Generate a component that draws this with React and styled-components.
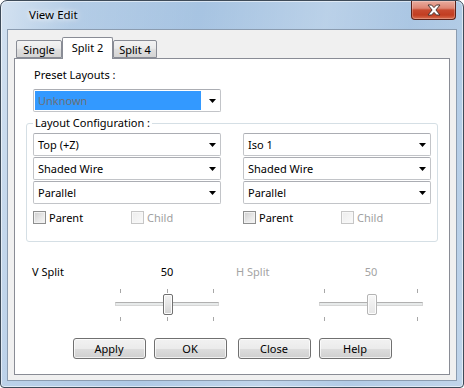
import React from 'react';
import styled, { createGlobalStyle } from 'styled-components';

const GlobalStyle = createGlobalStyle`
  html, body { margin: 0; padding: 0; }
  body {
    width: 464px;
    height: 388px;
    overflow: hidden;
    font-family: "Noto Sans", "Open Sans", sans-serif;
    font-size: 11px;
    color: #000;
  }
  * { box-sizing: border-box; }
`;

const Window = styled.div`
  width: 464px;
  height: 388px;
  border: 1px solid #3e4b59;
  border-radius: 7px 7px 4px 4px;
  background:
    linear-gradient(100deg, rgba(255,255,255,0.5) 0%, rgba(255,255,255,0.15) 14%, rgba(255,255,255,0) 38%, rgba(255,255,255,0.22) 62%, rgba(255,255,255,0.04) 78%, rgba(255,255,255,0.22) 100%),
    linear-gradient(to bottom, #a7c4e2, #afc9e5);
  box-shadow: inset 0 0 0 1px rgba(255,255,255,0.55);
  display: flex;
  flex-direction: column;
`;

const TitleBar = styled.div`
  flex: 0 0 28px;
  display: flex;
  align-items: flex-start;
`;

const TitleText = styled.span`
  margin: 6px 0 0 28px;
  font-size: 11.5px;
  line-height: 16px;
  text-shadow: 0 0 5px #fff, 0 0 9px rgba(255,255,255,0.9);
`;

const CloseButton = styled.div`
  margin-left: auto;
  margin-right: 7px;
  width: 45px;
  height: 19px;
  border: 1px solid #5b2118;
  border-top: none;
  border-radius: 0 0 4px 4px;
  background: linear-gradient(#e9ac9e 0%, #de8573 40%, #c84a2f 50%, #c23d21 78%, #d96e4f 100%);
  box-shadow: inset 0 0 0 1px rgba(255,255,255,0.25);
  display: flex;
  align-items: center;
  justify-content: center;
`;

const Client = styled.div`
  flex: 1;
  margin: 0 6px 6px;
  border: 1px solid #8b9cb0;
  background: #f0f0f0;
  padding: 7px 6px 5px;
  display: flex;
  flex-direction: column;
`;

const TabStrip = styled.div`
  flex: 0 0 21px;
  display: flex;
  align-items: flex-end;
  padding-left: 2px;
  position: relative;
  z-index: 1;
`;

const Tab = styled.div`
  width: ${p => p.$w}px;
  height: ${p => (p.$active ? 22 : 18)}px;
  margin-bottom: ${p => (p.$active ? -1 : 0)}px;
  border: 1px solid #898c95;
  border-bottom: ${p => (p.$active ? 'none' : '1px solid #898c95')};
  border-radius: 2px 2px 0 0;
  background: ${p => (p.$active ? '#fff' : 'linear-gradient(#f3f3f3 0%, #ebebeb 45%, #dedede 55%, #d4d4d4 100%)')};
  display: flex;
  align-items: center;
  justify-content: center;
  padding-top: ${p => (p.$active ? 0 : 1)}px;
  padding-bottom: ${p => (p.$active ? 2 : 0)}px;
  line-height: 16px;
`;

const Panel = styled.div`
  flex: 1;
  background: #fff;
  border: 1px solid #898c95;
  padding-top: 8px;
  display: flex;
  flex-direction: column;
`;

const FieldLabel = styled.div`
  padding-left: 19px;
  line-height: 16px;
  height: 16px;
`;

const Combo = styled.div`
  width: 188px;
  height: 23px;
  margin: ${p => p.$margin || '0'};
  border: 1px solid #c2c4c8;
  border-top-color: #abadb3;
  border-radius: 2px;
  background: #fff;
  display: flex;
  align-items: center;
  padding: 0 4px 0 ${p => (p.$selected ? 1 : 4)}px;
  line-height: 16px;
`;

const ComboText = styled.span`
  flex: 1;
  white-space: nowrap;
`;

const Selection = styled.span`
  flex: 0 0 166px;
  align-self: stretch;
  margin: 1px 0;
  background: #3399ff;
  color: #6a7077;
  padding-left: 3px;
  display: flex;
  align-items: center;
`;

const ArrowWrap = styled.span`
  margin-left: auto;
  display: flex;
  align-items: center;
`;

const Group = styled.fieldset`
  margin: 3px 0 0 11px;
  width: 412px;
  min-width: 0;
  border: 1px solid #d5dfe5;
  border-radius: 3px;
  padding: 2px 6px 17px 6px;
`;

const Legend = styled.legend`
  padding: 0 2px;
  line-height: 16px;
`;

const ConfigGrid = styled.div`
  display: grid;
  grid-template-columns: 188px 188px;
  column-gap: 22px;
`;

const ConfigColumn = styled.div`
  display: flex;
  flex-direction: column;
  gap: 1px;
`;

const CheckRow = styled.div`
  margin-top: 6px;
  display: grid;
  grid-template-columns: 98px auto;
  height: 13px;
`;

const CheckItem = styled.label`
  display: flex;
  align-items: center;
  gap: 3px;
  line-height: 13px;
  color: ${p => (p.$disabled ? '#a0a0a0' : '#000')};
`;

const CheckBox = styled.span`
  width: 13px;
  height: 13px;
  flex: 0 0 13px;
  border: 1px solid ${p => (p.$disabled ? '#c6c6c6' : '#8e8f8f')};
  background: ${p => (p.$disabled ? 'linear-gradient(135deg, #ececec, #fafafa)' : 'linear-gradient(135deg, #cdcdcd 0%, #e9e9e9 60%, #f5f5f5 100%)')};
  box-shadow: inset 0 0 0 1px ${p => (p.$disabled ? '#f7f7f7' : '#f1f1f1')};
`;

const SplitRow = styled.div`
  margin-top: 22px;
  padding-left: 17px;
  display: flex;
`;

const SplitControl = styled.div`
  width: 204px;
  display: grid;
  grid-template-columns: 83px 104px;
  grid-template-rows: 16px 32px;
  row-gap: 9px;
  color: ${p => (p.$disabled ? '#a3a3a3' : '#000')};
`;

const SplitLabel = styled.div`
  line-height: 16px;
  white-space: nowrap;
`;

const SplitValue = styled.div`
  line-height: 16px;
  text-align: center;
`;

const Slider = styled.div`
  grid-column: 2;
  position: relative;
  display: flex;
  flex-direction: column;
`;

const TickRow = styled.div`
  height: 4px;
  padding: 0 5px;
  display: flex;
  justify-content: space-between;
  margin-top: ${p => p.$top || 0}px;
`;

const Tick = styled.span`
  width: 1px;
  height: 4px;
  background: #a7a7a7;
`;

const Track = styled.div`
  margin-top: 9px;
  height: 4px;
  border: 1px solid #d6d6d6;
  border-top-color: #b0b0b0;
  background: #e7eaea;
`;

const Thumb = styled.div`
  position: absolute;
  top: 5px;
  width: 10px;
  height: 21px;
  border: 1px solid ${p => (p.$disabled ? '#b4b4b4' : '#707070')};
  border-radius: 2px;
  background: ${p => (p.$disabled ? 'linear-gradient(#f8f8f8, #eeeeee 50%, #e6e6e6)' : 'linear-gradient(#f3f3f3, #e6e6e6 45%, #d2d2d2)')};
  box-shadow: inset 0 0 0 1px #fcfcfc;
`;

const ButtonRow = styled.div`
  margin-top: 17px;
  display: flex;
  justify-content: center;
  gap: 8px;
`;

const Button = styled.button`
  width: 73px;
  height: 21px;
  margin-left: ${p => (p.$extra ? 3 : 0)}px;
  padding: 0;
  border: 1px solid #707070;
  border-radius: 3px;
  background: linear-gradient(#f2f2f2 0%, #ebebeb 50%, #dddddd 51%, #cfcfcf 100%);
  box-shadow: inset 0 0 0 1px rgba(255,255,255,0.7);
  font-family: inherit;
  font-size: 11px;
  line-height: 16px;
  color: #000;
`;

const Arrow = () => (
  <ArrowWrap>
    <svg width="7" height="4" viewBox="0 0 7 4">
      <polygon points="0,0 7,0 3.5,4" fill="#000" />
    </svg>
  </ArrowWrap>
);

const CloseGlyph = () => (
  <svg width="14" height="12" viewBox="0 0 14 12">
    <path
      d="M1 1 H4.6 L7 3.6 L9.4 1 H13 L8.9 6 L13 11 H9.4 L7 8.4 L4.6 11 H1 L5.1 6 Z"
      fill="#fff"
      stroke="#4b3530"
      strokeWidth="1"
      strokeLinejoin="round"
    />
  </svg>
);

const ComboBox = ({ value, margin }) => (
  <Combo $margin={margin}>
    <ComboText>{value}</ComboText>
    <Arrow />
  </Combo>
);

const Check = ({ label, disabled }) => (
  <CheckItem $disabled={disabled}>
    <CheckBox $disabled={disabled} />
    {label}
  </CheckItem>
);

const SliderControl = ({ frac, ticks, disabled }) => {
  const list = Array.from({ length: ticks });
  return (
    <Slider>
      <TickRow>{list.map((_, i) => <Tick key={i} />)}</TickRow>
      <Track />
      <TickRow $top={11}>{list.map((_, i) => <Tick key={i} />)}</TickRow>
      <Thumb $disabled={disabled} style={{ left: Math.round(frac * 94) + 1 }} />
    </Slider>
  );
};

const columns = [
  ['Top (+Z)', 'Shaded Wire', 'Parallel'],
  ['Iso 1', 'Shaded Wire', 'Parallel'],
];

export default function App() {
  return (
    <>
      <GlobalStyle />
      <Window>
        <TitleBar>
          <TitleText>View Edit</TitleText>
          <CloseButton>
            <CloseGlyph />
          </CloseButton>
        </TitleBar>
        <Client>
          <TabStrip>
            <Tab $w={46}>Single</Tab>
            <Tab $w={51} $active>Split 2</Tab>
            <Tab $w={44}>Split 4</Tab>
          </TabStrip>
          <Panel>
            <FieldLabel>Preset Layouts :</FieldLabel>
            <Combo $margin="6px 0 0 18px" $selected>
              <Selection>Unknown</Selection>
              <Arrow />
            </Combo>
            <Group>
              <Legend>Layout Configuration :</Legend>
              <ConfigGrid>
                {columns.map((col, ci) => (
                  <ConfigColumn key={ci}>
                    {col.map((v, i) => (
                      <ComboBox key={i} value={v} />
                    ))}
                    <CheckRow>
                      <Check label="Parent" />
                      <Check label="Child" disabled />
                    </CheckRow>
                  </ConfigColumn>
                ))}
              </ConfigGrid>
            </Group>
            <SplitRow>
              <SplitControl>
                <SplitLabel>V Split</SplitLabel>
                <SplitValue>50</SplitValue>
                <SliderControl frac={0.5} ticks={3} />
              </SplitControl>
              <SplitControl $disabled>
                <SplitLabel>H Split</SplitLabel>
                <SplitValue>50</SplitValue>
                <SliderControl frac={0.5} ticks={2} disabled />
              </SplitControl>
            </SplitRow>
            <ButtonRow>
              <Button>Apply</Button>
              <Button>OK</Button>
              <Button $extra>Close</Button>
              <Button>Help</Button>
            </ButtonRow>
          </Panel>
        </Client>
      </Window>
    </>
  );
}
